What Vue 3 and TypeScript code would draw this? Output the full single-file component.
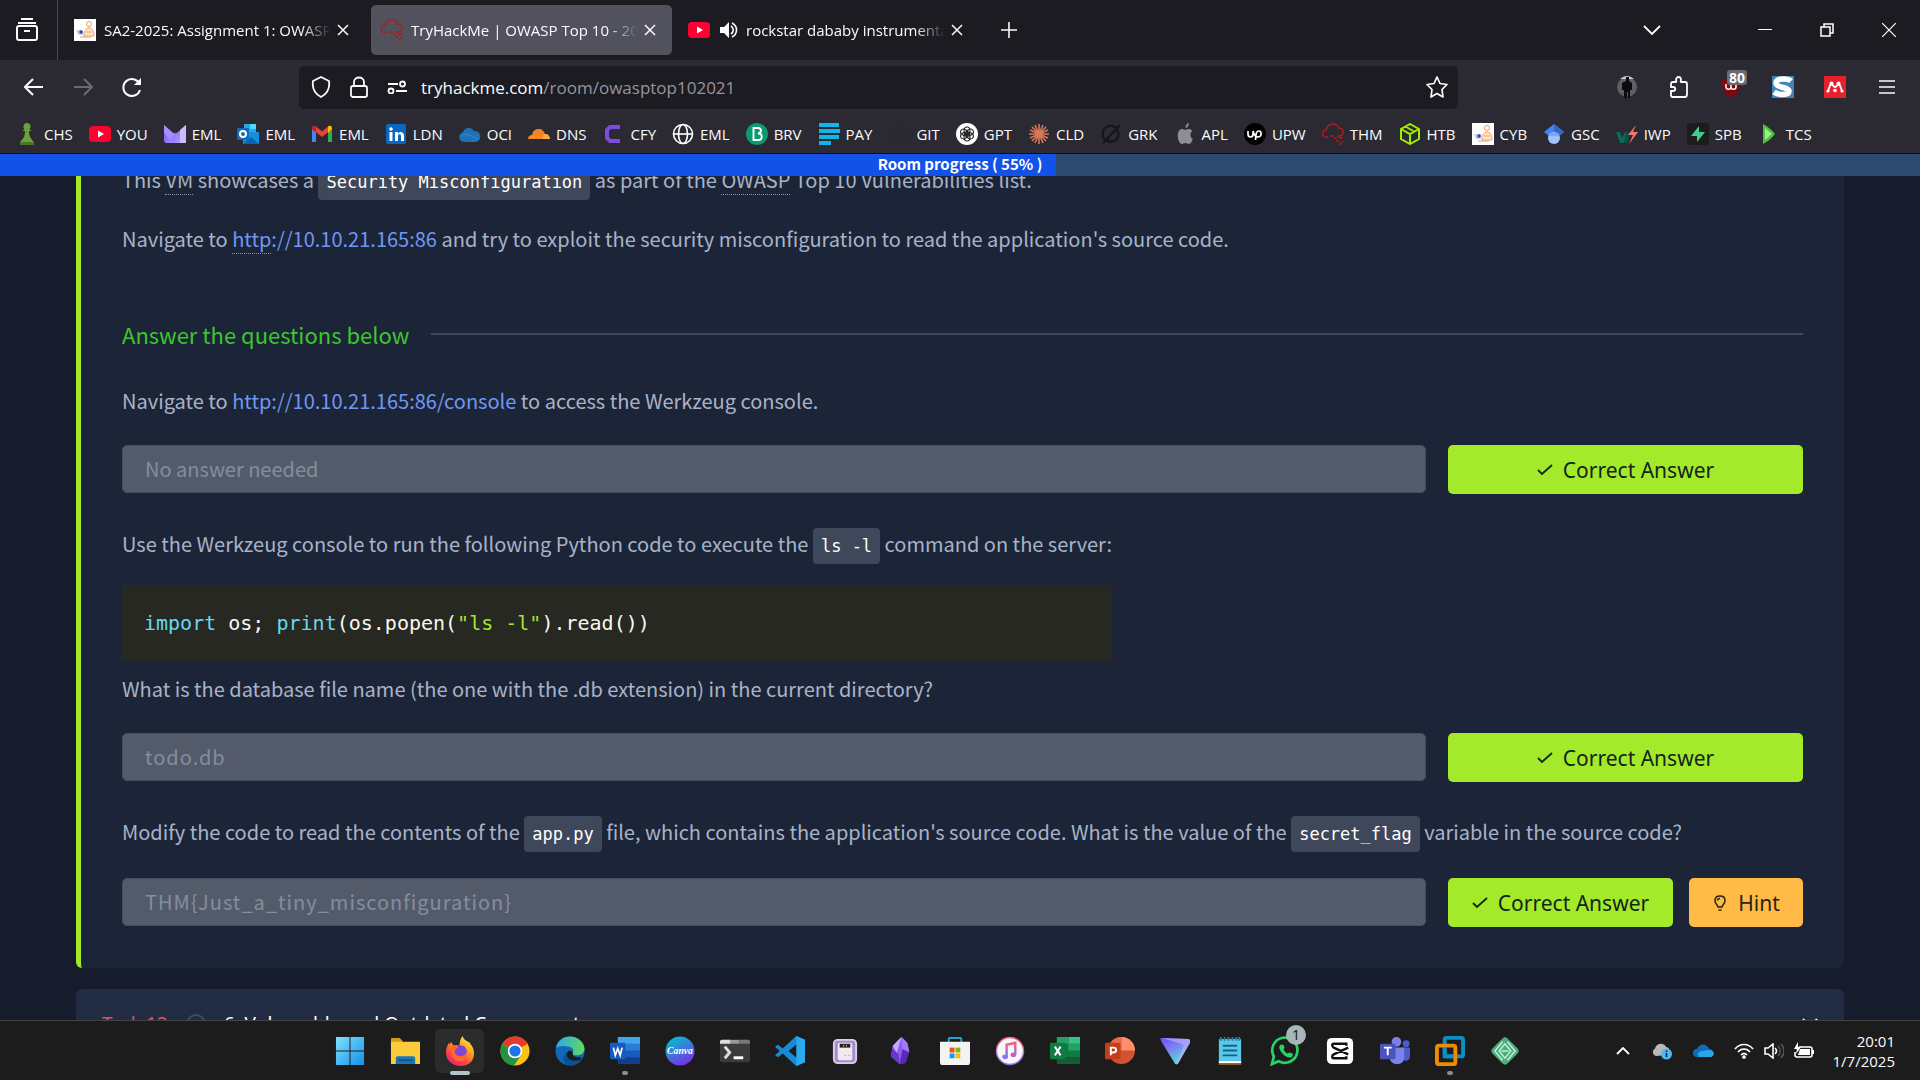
<script setup lang="ts">
import { ref } from 'vue'

interface Bookmark { label: string; icon: string }
interface App { name: string; icon: string; state?: 'active' | 'open'; badge?: string }

const cyb = '<path fill="#fff" d="M0 0h22v22H0z"/><circle cx="15" cy="5" r="2.6" fill="#fff" stroke="#f0a060"/><path d="M10 17c0-5 2-8 5-8s5 3 5 8zM12 13h6" fill="#fbe6cf" stroke="#f0a060"/><path d="M2 11h7l1 5H4z" fill="#c9d4ee"/><circle cx="7" cy="13" r="1.8" fill="#2b4aa8"/><path d="M6 18h11" stroke="#e0a070"/>'
const youtube = '<rect x="0" y="3" width="22" height="16" rx="4" fill="#ff0033"/><path d="M9 7.500v7l6-3.500z" fill="#fff"/>'
const thm = '<path d="M6 14H4a3.500 3.500 0 0 1 0-7c1-4 4-6 7-6 3 0 5 2 6 4 3 0 4 2 4 4s-1 4-3 4h-3M8 13h4" fill="none" stroke="#a91d22" stroke-width="1.500"/><path d="M12 15h3m2 0h4M14 18h3m2 1h2M17 21h3" stroke="#a91d22" stroke-width="1.500"/>'

const icons: Record<string, string> = {
  cyb, youtube, thm,
  chess: '<path fill="#6aa13c" d="M11 0a3.500 3.500 0 0 1 2.500 6l2 2h-2.500c0 4 1 6 3 9l2 2v3H4v-3l2-2c2-3 3-5 3-9H6.500l2-2A3.500 3.500 0 0 1 11 0z"/><path fill="#45762a" d="M4 19h14v3H4z"/>',
  proton: '<defs><linearGradient id="pm" x2="1" y2="1"><stop stop-color="#6d4aff"/><stop offset="1" stop-color="#b9a5ff"/></linearGradient></defs><path d="M0 2l8 7c2 1.600 4 1.600 6 0l8-7v18H3a3 3 0 0 1-3-3z" fill="url(#pm)"/><path d="M0 2l11 10-5 5-6-7z" fill="#a58cff"/><path d="M16 7l6-5v18h-6z" fill="#cbbcff"/>',
  outlook: '<path d="M7 1h12v8H7z" fill="#28a8ea"/><path d="M13 1h6v5h-6z" fill="#50d9ff"/><path d="M6 9h16v12H6z" fill="#1490df"/><path d="M6 21l8-7 8 7z" fill="#0a63b8"/><rect y="5" width="12" height="12" rx="1" fill="#0f6cbd"/><circle cx="6" cy="11" r="3" fill="none" stroke="#fff" stroke-width="2"/>',
  gmail: '<path d="M1 6v13h4V9z" fill="#4285f4"/><path d="M21 6v13h-4V9z" fill="#34a853"/><path d="M1 6c0-3 2-4 4-2.500l6 5 6-5c2-1.500 4-.5 4 2.500l-10 8z" fill="#ea4335"/><path d="M17 3.500c2-1.500 4-.5 4 2.500l-4 4z" fill="#fbbc04"/><path d="M1 6c0-3 2-4 4-2.500V9.500z" fill="#c5221f"/>',
  linkedin: '<rect x="1" y="1" width="20" height="20" rx="2" fill="#0a66c2"/><circle cx="6" cy="6" r="1.800" fill="#fff"/><path d="M4.500 9h3v9h-3zM10 9h3v1.500c2-3 6-1.500 6 2.500v5h-3v-5c0-2.500-3-2.500-3 0v5h-3z" fill="#fff"/>',
  cloud: '<path d="M5 19a5 5 0 0 1-1-9.800A6 6 0 0 1 15 8a5.600 5.600 0 0 1 2 11z" fill="#1f72b8"/><path d="M3 12c5-2 9 1 17 5" stroke="#3a8ccc" fill="none"/>',
  cloudflare: '<path d="M0 16c0-3 2-4 4-4 1-5 4-6 7-6 3 0 5 2 6 5l-1 5z" fill="#f6821f"/><path d="M14 16l2-5h2c2 0 4 2 4 5z" fill="#fbad41"/><path d="M3 14h11" stroke="#f9a04f"/>',
  cfy: '<path d="M18 4H8L5 7v8l3 3h10" fill="none" stroke="#7d4be0" stroke-width="4"/>',
  globe: '<circle cx="11" cy="11" r="9.500" fill="none" stroke="#fff" stroke-width="1.600"/><ellipse cx="11" cy="11" rx="4.500" ry="9.500" fill="none" stroke="#fff" stroke-width="1.600"/><path d="M2 11h18" stroke="#fff" stroke-width="1.600"/>',
  brv: '<circle cx="11" cy="11" r="11" fill="#0b996e"/><path d="M7.500 5h4.500c4 0 4 5 0 5.500 5 0 5 6.500 0 6.500H7.500z" fill="none" stroke="#fff" stroke-width="1.900"/>',
  pay: '<path d="M1 0h20v4H1zM1 6h21v4H1zM1 12h20v4H1zM1 18h12v4H1z" fill="#11b6e8"/>',
  git: '<circle cx="11" cy="11" r="10" fill="#2a2932"/>',
  gpt: '<circle cx="11" cy="11" r="11" fill="#fff"/><g fill="none" stroke="#222" stroke-width="1.100"><ellipse cx="11" cy="8" rx="3" ry="4"/><ellipse cx="11" cy="8" rx="3" ry="4" transform="rotate(60 11 11)"/><ellipse cx="11" cy="8" rx="3" ry="4" transform="rotate(120 11 11)"/><ellipse cx="11" cy="8" rx="3" ry="4" transform="rotate(180 11 11)"/><ellipse cx="11" cy="8" rx="3" ry="4" transform="rotate(240 11 11)"/><ellipse cx="11" cy="8" rx="3" ry="4" transform="rotate(300 11 11)"/></g>',
  claude: '<path d="M11 1v20M1 11h20M4 4l14 14M18 4L4 18M7 2l8 18M15 2L7 20M2 7l18 8M20 7L2 15" stroke="#d97757" stroke-width="1.600"/>',
  grok: '<path d="M17 6a8 8 0 1 0 1 8M3 20L20 2M6 16a7 7 0 0 0 11-9" fill="none" stroke="#15141a" stroke-width="2"/>',
  apple: '<path d="M15 0c0 3-2 5-4 5 0-3 2-5 4-5zM11 7c1 0 2-1.200 4-1 2 0 3 1 4 2-3 2-3 6 .5 8-1 3-3 5-4.500 5s-2-1-4-1-2.500 1-4 1C4 21 2 16 2 12.500 2 9 4 6 7 6c2 0 3 1 4 1z" fill="#8e8e92" transform="translate(2 0) scale(.86 1)"/>',
  upwork: '<circle cx="11" cy="11" r="11" fill="#000"/><path d="M4 8v3c0 4 5 4 5 0V8c1 4 3 6 5 6 4 0 4-6 1-6-3 0-3 3-3.500 9" fill="none" stroke="#fff" stroke-width="1.700"/>',
  htb: '<path d="M11 1l9 5v10l-9 5-9-5V6zM2 6l9 5 9-5M11 11v10M6.500 3.500L15 8.500" fill="none" stroke="#9fef00" stroke-width="2"/>',
  scholar: '<path d="M11 1l10 8-10 8L1 9z" fill="#4285f4"/><path d="M11 1l10 8-4 3-6-4z" fill="#356ac3"/><circle cx="11" cy="15" r="6" fill="#a0c3ff"/><path d="M5.600 13a6 6 0 0 1 10.800 0" fill="#76a7fa"/>',
  iwp: '<path d="M0 9h4l2 6 3-6h3l-4 11H4z" fill="#0c6b58"/><path d="M10 9h4l-2 11H8z" fill="#0a4f45"/><path d="M20 2l-8 10h5l-4 9 9-12h-5z" fill="#f3776b"/>',
  supabase: '<rect width="22" height="22" rx="3" fill="#1c1c1c"/><path d="M12 3v6h6l-8 10v-6H4z" fill="#3ecf8e"/>',
  tcs: '<path d="M5 1c4 2 8 5 12 10-4 5-8 8-12 10z" fill="#4cc238"/><path d="M7 5l7 6-7 6z" fill="#a5ea8c"/>',
}

const bookmarks: Bookmark[] = [
  { label: 'CHS', icon: 'chess' }, { label: 'YOU', icon: 'youtube' }, { label: 'EML', icon: 'proton' },
  { label: 'EML', icon: 'outlook' }, { label: 'EML', icon: 'gmail' }, { label: 'LDN', icon: 'linkedin' },
  { label: 'OCI', icon: 'cloud' }, { label: 'DNS', icon: 'cloudflare' }, { label: 'CFY', icon: 'cfy' },
  { label: 'EML', icon: 'globe' }, { label: 'BRV', icon: 'brv' }, { label: 'PAY', icon: 'pay' },
  { label: 'GIT', icon: 'git' }, { label: 'GPT', icon: 'gpt' }, { label: 'CLD', icon: 'claude' },
  { label: 'GRK', icon: 'grok' }, { label: 'APL', icon: 'apple' }, { label: 'UPW', icon: 'upwork' },
  { label: 'THM', icon: 'thm' }, { label: 'HTB', icon: 'htb' }, { label: 'CYB', icon: 'cyb' },
  { label: 'GSC', icon: 'scholar' }, { label: 'IWP', icon: 'iwp' }, { label: 'SPB', icon: 'supabase' },
  { label: 'TCS', icon: 'tcs' },
]

const apps: App[] = [
  { name: 'Start', icon: '<defs><linearGradient id="wn" x2="1" y2="1"><stop stop-color="#7fe3ff"/><stop offset="1" stop-color="#1590e8"/></linearGradient></defs><path fill="url(#wn)" d="M1 1h14v14H1zM16 1h14v14H16zM1 16h14v14H1zM16 16h14v14H16z"/>' },
  { name: 'File Explorer', icon: '<path d="M1 4c0-1 0-2 1-2h8l3 3v6H1z" fill="#d99a10"/><path d="M1 6h30v21c0 2 0 2-1 2H2c-1 0-1 0-1-2z" fill="#fccb3a"/><path d="M6 23c0-1 1-2 2-2h16c1 0 2 1 2 2v6H6z" fill="#1a76b8"/><path d="M9 25h14" stroke="#0c5590" stroke-width="2"/>' },
  { name: 'Firefox', state: 'active', icon: '<defs><linearGradient id="ff" x1=".8" x2=".2" y2="1"><stop stop-color="#fff04a"/><stop offset=".4" stop-color="#ff9a1e"/><stop offset=".75" stop-color="#ff3b4a"/><stop offset="1" stop-color="#e0218a"/></linearGradient></defs><path d="M18 0c2 5 5 5 7 7 0-1 1 0 1 1 3 3 4 7 4 10 0 8-6 13-14 13S1 25 1 17c0-4 2-8 3-10l1 2 1-3 3 4c3-1 5 0 6 0 0-4 1-7 3-10z" fill="url(#ff)"/><circle cx="16" cy="16" r="6.500" fill="#8144d8"/><path d="M6 11c3-2 6-1 8 1-2 1-4 2-4 4 0 3 3 5 6 5s5-2 6-4c1 5-2 9-7 9-7 0-10-8-9-15z" fill="#ff6a2c"/>' },
  { name: 'Chrome', icon: '<circle cx="15.500" cy="15.500" r="15" fill="#fbc116"/><path d="M15.500 15.500L2.500 8a15 15 0 0 1 26 0z" fill="#e33b2e"/><path d="M15.500 15.500L2.500 8a15 15 0 0 0 12 22.500l7.500-11z" fill="#229342"/><circle cx="15.500" cy="15.500" r="7.500" fill="#fff"/><circle cx="15.500" cy="15.500" r="5.800" fill="#1a73e8"/>' },
  { name: 'Edge', icon: '<defs><linearGradient id="e1" x2="1"><stop stop-color="#2aa8e8"/><stop offset="1" stop-color="#5fdc5f"/></linearGradient></defs><circle cx="15.500" cy="15.500" r="15" fill="#1267b8"/><path d="M1 13C2 5 8 .5 15.500.5S30 6 30.500 13c0 5-4 7-8 7-3 0-5-1-4-3 1-1 1-5-4-6C9 10 3 10 1 13z" fill="url(#e1)"/><path d="M12 17c-1 7 5 11 15 8-3 4-7 5.500-11 5.500C9 30 6 22 12 17z" fill="#0b4f96"/><path d="M12 18c2-4 4-4 6.500-1-1 3 1 5 7 5 3 0 2 2 0 3-9 2-14-2-13.500-7z" fill="#1c1c1c"/>' },
  { name: 'Word', state: 'open', icon: '<path d="M8 1h23v8H8z" fill="#41a5ee"/><path d="M8 8h23v8H8z" fill="#2b7cd3"/><path d="M8 15h23v8H8z" fill="#185abd"/><path d="M8 22h23v7H8z" fill="#103f91"/><rect y="7" width="16" height="17" rx="1" fill="#185abd"/><path d="M3.500 12l2 8 2.500-7 2.500 7 2-8" fill="none" stroke="#fff" stroke-width="1.800"/>' },
  { name: 'Canva', icon: '<defs><linearGradient id="cv" x1=".2" x2=".7" y2="1"><stop stop-color="#00c4cc"/><stop offset="1" stop-color="#7d2ae8"/></linearGradient></defs><circle cx="15.500" cy="15.500" r="15" fill="url(#cv)"/><text x="15.500" y="19" font-size="10" font-style="italic" font-weight="700" font-family="Liberation Serif, serif" text-anchor="middle" fill="#fff">Canva</text>' },
  { name: 'Terminal', icon: '<rect x="0" y="4" width="31" height="23" rx="2" fill="#3b3b3b"/><path d="M0 8V6c0-1 1-2 2-2h9v4z" fill="#ddd"/><path d="M11 4h9v4h-9z" fill="#999"/><path d="M20 4h9c1 0 2 1 2 2v2H20z" fill="#777"/><path d="M5 11l5 6-5 6" fill="none" stroke="#ddd" stroke-width="3"/><path d="M14 22.500h10" stroke="#fff" stroke-width="3"/>' },
  { name: 'Visual Studio Code', icon: '<path d="M22 0l9 4v23l-9 4L8 18l-5 4-3-2 5-4.500L0 11l3-2 5 4zM23 8l-9 7.500 9 7.500z" fill="#1a8ad4" fill-rule="evenodd"/><path d="M22 0l9 4v23l-9 4z" fill="#2aa9f0"/>' },
  { name: 'Device', icon: '<rect x="4" y="4" width="23" height="24" rx="4" fill="#a78bd0" stroke="#d8d0e4" stroke-width="2"/><rect x="8" y="7" width="15" height="18" rx="2" fill="#eee9f2"/><path d="M10 8h11v4H10z" fill="#222"/><path d="M14 9v2m3-2v2" stroke="#e0b020"/><path d="M15 20h2m2 0h2" stroke="#aaa"/>' },
  { name: 'Obsidian', icon: '<path d="M17 1l6 6 2 9-4 12-6 1-9-8 2-11z" fill="#8b5cf6"/><path d="M17 1l-9 9 4 8z" fill="#c4a8fb"/><path d="M17 1l6 6 2 9-7-3z" fill="#a27bf5"/><path d="M8 13l6 6 1 10-9-8z" fill="#6a35cf"/><path d="M18 14l7 3-4 11-6 1z" fill="#5b28b8"/>' },
  { name: 'Microsoft Store', icon: '<path d="M9 7V3c0-1 0-1 1-1h11c1 0 1 0 1 1v4" fill="none" stroke="#28a0d8" stroke-width="2"/><path d="M0 6h31v21c0 2-1 3-3 3H3c-2 0-3-1-3-3z" fill="#f3f3f3"/><path d="M10 12h5v5h-5z" fill="#f25022"/><path d="M16 12h5v5h-5z" fill="#7fba00"/><path d="M10 18h5v5h-5z" fill="#00a4ef"/><path d="M16 18h5v5h-5z" fill="#ffb900"/>' },
  { name: 'iTunes', icon: '<defs><linearGradient id="it" x2="0" y2="1"><stop stop-color="#fb5c74"/><stop offset="1" stop-color="#7f7bf5"/></linearGradient></defs><circle cx="15.500" cy="15.500" r="14" fill="#f8f8fb" stroke="url(#it)" stroke-width="1.500"/><path d="M12 21V9l9-2v12" fill="none" stroke="url(#it)" stroke-width="2.500"/><ellipse cx="10.500" cy="21.500" rx="3" ry="2.500" fill="#7f7bf5"/><ellipse cx="19" cy="19.500" rx="3" ry="2.500" fill="#c45ccf"/>' },
  { name: 'Excel', icon: '<path d="M7 1h12v8H7z" fill="#21a366"/><path d="M19 1h12v8H19z" fill="#33c481"/><path d="M7 8h24v14H7z" fill="#107c41"/><path d="M19 8h12v7H19z" fill="#21a366"/><path d="M7 22h24v7H7z" fill="#185c37"/><rect y="7" width="16" height="17" rx="1" fill="#107c41"/><path d="M5 11l6 9M11 11l-6 9" stroke="#fff" stroke-width="2"/>' },
  { name: 'PowerPoint', icon: '<circle cx="17" cy="15" r="14" fill="#d35230"/><path d="M17 1a14 14 0 0 1 14 14H17z" fill="#ff8f6b"/><path d="M17 1a14 14 0 0 0-14 14h14z" fill="#ed6c47"/><rect y="7" width="16" height="17" rx="1" fill="#c43e1c"/><path d="M6 20v-8h2.500c4 0 4 5 0 5H6" fill="none" stroke="#fff" stroke-width="2"/>' },
  { name: 'Proton VPN', icon: '<defs><linearGradient id="pv" x2=".6" y2="1"><stop stop-color="#6d4aff"/><stop offset=".5" stop-color="#7b8af0"/><stop offset="1" stop-color="#3ef0c0"/></linearGradient></defs><path d="M2 2l27 1c2 0 3 2 2 4L19 28c-1 2-3 2-4 0L1 5C0 3 0 2 2 2z" fill="url(#pv)"/><path d="M2 2l27 1c2 0 3 2 2 4L19 28c-1 1-2 1-3 0l8-16c1-2 0-4-2-4z" fill="#bfa8ff" opacity=".7"/>' },
  { name: 'Notepad', icon: '<rect x="4" y="3" width="23" height="27" rx="1" fill="#5cc8e8"/><path d="M4 27h23v3H4z" fill="#8a5424"/><path d="M4 26h23v2H4z" fill="#fff"/><path d="M8 10h15M8 15h15M8 20h15" stroke="#14628c" stroke-width="2"/><path d="M6 1v4m4-4v4m4-4v4m4-4v4m4-4v4m3-4v4" stroke="#1780b0" stroke-width="2"/>' },
  { name: 'WhatsApp', badge: '1', icon: '<path d="M2 29l2-8a13 13 0 1 1 5 5z" fill="#1c1c1c" stroke="#25d366" stroke-width="2.800"/><path d="M11 9c-2 1-2 4 1 8s7 6 10 5c2-1 2-4 1-4l-3-1-2 1c-2-1-3-2-4-4l1-2-1-3z" fill="#25d366"/>' },
  { name: 'CapCut', icon: '<rect x="2" y="2" width="27" height="27" rx="5" fill="#fff"/><path d="M22 10V8H9c-2 0-2 3 0 4l15 7M22 21v2H9c-2 0-2-3 0-4l15-7" fill="none" stroke="#111" stroke-width="2.500"/>' },
  { name: 'Teams', icon: '<circle cx="17" cy="6" r="5" fill="#7b83eb"/><circle cx="27" cy="8" r="3.500" fill="#5059c9"/><path d="M22 12h9v9c0 6-8 6-9 1z" fill="#5059c9"/><path d="M10 12h15v10c0 10-15 9-15 0z" fill="#7b83eb"/><rect y="8" width="16" height="16" rx="1" fill="#4b53bc"/><path d="M4 12h8M8 12v8" stroke="#fff" stroke-width="2"/>' },
  { name: 'VMware', state: 'open', icon: '<rect x="10" y="2" width="19" height="19" rx="2" fill="none" stroke="#0b8fc7" stroke-width="4"/><rect x="2" y="10" width="19" height="19" rx="2" fill="none" stroke="#f08a00" stroke-width="4"/><path d="M10 12v9h9" fill="none" stroke="#0b8fc7" stroke-width="4"/>' },
  { name: 'Vault', icon: '<rect x="4.500" y="4.500" width="22" height="22" rx="4" fill="#4cae7f" transform="rotate(45 15.500 15.500)"/><path d="M13 6l-8 9.500 8 9.500M18 6l8 9.500-8 9.500M15.500 8l-6 7.500 6 7.500 6-7.500zM12 15.500h7" fill="none" stroke="#c8efd9" stroke-width="1.400"/>' },
]

const answers = ref(['', 'todo.db', 'THM{Just_a_tiny_misconfiguration}'])
</script>

<template>
  <div class="screen">
    <header class="browser">
      <div class="tabs">
        <button class="view" aria-label="Recent browsing">
          <svg width="24" height="24" viewBox="0 0 24 24" fill="none" stroke="#fbfbfe" stroke-width="2"><rect x="2" y="8" width="20" height="14" rx="2" /><path d="M3 5h18M6 1h12M9 13h6" /></svg>
        </button>
        <div class="tab">
          <svg class="fav" viewBox="0 0 22 22" v-html="icons.cyb" />
          <span class="tab-title">SA2-2025: Assignment 1: OWASP</span>
          <button class="close" aria-label="Close tab"><svg width="12" height="12" viewBox="0 0 12 12"><path d="M1 1l10 10M11 1L1 11" stroke="#fbfbfe" stroke-width="1.500" /></svg></button>
        </div>
        <div class="tab on">
          <svg class="fav" viewBox="0 0 22 22" v-html="icons.thm" />
          <span class="tab-title">TryHackMe | OWASP Top 10 - 202</span>
          <button class="close" aria-label="Close tab"><svg width="12" height="12" viewBox="0 0 12 12"><path d="M1 1l10 10M11 1L1 11" stroke="#fbfbfe" stroke-width="1.500" /></svg></button>
        </div>
        <div class="tab">
          <svg class="fav" viewBox="0 0 22 22" v-html="icons.youtube" />
          <svg class="sound" width="18" height="18" viewBox="0 0 18 18"><path d="M0 6h4l5-5v16l-5-5H0z" fill="#fbfbfe" /><path d="M11 5c3 2 3 6 0 8M12 2c6 3 6 11 0 14" fill="none" stroke="#fbfbfe" stroke-width="1.600" /></svg>
          <span class="tab-title">rockstar dababy instrumenta</span>
          <button class="close" aria-label="Close tab"><svg width="12" height="12" viewBox="0 0 12 12"><path d="M1 1l10 10M11 1L1 11" stroke="#fbfbfe" stroke-width="1.500" /></svg></button>
        </div>
        <button class="plus" aria-label="New tab"><svg width="18" height="18" viewBox="0 0 18 18"><path d="M9 1v16M1 9h16" stroke="#fbfbfe" stroke-width="1.600" /></svg></button>
        <div class="window">
          <button class="list" aria-label="List all tabs"><svg width="18" height="12" viewBox="0 0 18 12"><path d="M1 2l8 8 8-8" fill="none" stroke="#fbfbfe" stroke-width="1.800" /></svg></button>
          <button aria-label="Minimize"><svg width="14" height="14" viewBox="0 0 14 14"><path d="M0 6.500h14" stroke="#fff" /></svg></button>
          <button aria-label="Restore"><svg width="14" height="14" viewBox="0 0 14 14" fill="none" stroke="#fff" stroke-width="1.500"><path d="M1 4h9v9H1zM4 4V1h9v9h-3" /></svg></button>
          <button aria-label="Close"><svg width="14" height="14" viewBox="0 0 14 14"><path d="M0 0l14 14M14 0L0 14" stroke="#fff" stroke-width="1.200" /></svg></button>
        </div>
      </div>

      <div class="nav">
        <button aria-label="Back"><svg width="20" height="20" viewBox="0 0 20 20" fill="none" stroke="#fbfbfe" stroke-width="2"><path d="M19 10H2M9 2l-8 8 8 8" /></svg></button>
        <button aria-label="Forward" disabled><svg width="20" height="20" viewBox="0 0 20 20" fill="none" stroke="#6b6a73" stroke-width="2"><path d="M1 10h17M11 2l8 8-8 8" /></svg></button>
        <button aria-label="Reload"><svg width="20" height="20" viewBox="0 0 20 20" fill="none" stroke="#fbfbfe" stroke-width="2"><path d="M18 8a8.500 8.500 0 1 0 0 5" /><path d="M19 1v7h-7z" fill="#fbfbfe" stroke="none" /></svg></button>
        <div class="address">
          <svg width="20" height="22" viewBox="0 0 20 22" fill="none" stroke="#fbfbfe" stroke-width="1.800"><path d="M10 1l8 4c1 7-2 13-8 16C4 18 1 12 2 5z" /></svg>
          <svg width="18" height="22" viewBox="0 0 18 22" fill="none" stroke="#fbfbfe" stroke-width="1.800"><rect x="1" y="10" width="16" height="11" rx="2" /><path d="M4 10V6c0-6 10-6 10 0v4" /></svg>
          <svg width="20" height="14" viewBox="0 0 20 14" fill="none" stroke="#fbfbfe" stroke-width="1.800"><path d="M1 4h10M9 11h11" /><circle cx="15.500" cy="4" r="2.500" /><circle cx="4" cy="11" r="2.500" /></svg>
          <div class="url">tryhackme.com<span>/room/owasptop102021</span></div>
          <svg width="22" height="22" viewBox="0 0 22 22" fill="none" stroke="#fbfbfe" stroke-width="1.700" stroke-linejoin="round"><path d="M11 1l3 6.500 7 1-5 5 1 7.500-6-3.500L5 21l1-7.500-5-5 7-1z" /></svg>
        </div>
        <div class="extensions">
          <button aria-label="Profile"><svg width="22" height="22" viewBox="0 0 22 22"><circle cx="11" cy="11" r="10" fill="#5e5e64" /><path d="M4 3c5-4 9-4 14 0z" fill="#ccc" /><path d="M10 5V1h3v4l3 2v7h-2v8h-2v-6h-1v6H8v-8H6V7z" fill="#0b0b0d" /></svg></button>
          <button aria-label="Extensions"><svg width="20" height="22" viewBox="0 0 20 22" fill="none" stroke="#fbfbfe" stroke-width="1.800"><path d="M2 8c0-2 1-2 2-2h3c1 0 0-1 0-2 0-4 5-4 5 0 0 1-1 2 0 2h4c2 0 2 1 2 2v10c0 2-1 3-2 3H4c-2 0-2-1-2-3v-3h2c3 0 3-4 0-4H2z" /></svg></button>
          <button class="ublock" aria-label="uBlock Origin"><svg width="20" height="22" viewBox="0 0 20 22"><path d="M10 1l9 3c0 9-1 13-9 18C2 17 1 13 1 4z" fill="#800610" /><path d="M5 8v3c0 3 5 3 5 0 0 3 5 3 5 0V8M10 8v4" fill="none" stroke="#fff" stroke-width="1.500" /></svg><b>80</b></button>
          <button aria-label="Scribd"><svg width="22" height="22" viewBox="0 0 22 22"><path d="M0 0h22v22H0z" fill="#4085b8" /><path d="M19 5C16 2 4 2 4 7c0 5 13 4 13 8 0 5-11 4-15 1" fill="none" stroke="#fff" stroke-width="5.500" /></svg></button>
          <button aria-label="Mendeley"><svg width="22" height="22" viewBox="0 0 22 22"><path d="M0 0h22v22H0z" fill="#e8202e" /><path d="M4 15c1-1 1-5 3-7 2 0 2 3 4 3s2-3 4-3c2 2 2 6 3 7" fill="none" stroke="#fff" stroke-width="1.800" /><circle cx="7.500" cy="7.500" r="2" fill="#fff" /><circle cx="14.500" cy="7.500" r="2" fill="#fff" /><circle cx="11" cy="14.500" r="1.800" fill="#fff" /><circle cx="4" cy="15" r="1.600" fill="#fff" /><circle cx="18" cy="15" r="1.600" fill="#fff" /></svg></button>
          <button aria-label="Menu"><svg width="16" height="14" viewBox="0 0 16 14"><path d="M0 1h16M0 7h16M0 13h16" stroke="#fbfbfe" stroke-width="1.600" /></svg></button>
        </div>
      </div>

      <nav class="bookmarks" aria-label="Bookmarks">
        <a v-for="(b, i) in bookmarks" :key="i" href="#"><svg class="fav" viewBox="0 0 22 22" v-html="icons[b.icon]" />{{ b.label }}</a>
      </nav>
    </header>

    <main class="page">
      <div class="progress"><div class="fill" :style="{ width: '55%' }"></div><b>Room progress ( 55% )</b></div>

      <article class="task">
        <p>This <abbr>VM</abbr> showcases a <code>Security Misconfiguration</code> as part of the <abbr>OWASP</abbr> Top 10 Vulnerabilities list.</p>
        <p>Navigate to <a href="#"><abbr>http</abbr>://10.10.21.165:86</a> and try to exploit the security misconfiguration to read the application's source code.</p>
        <h2>Answer the questions below</h2>

        <label class="question" for="answer-1">Navigate to <a href="#">http://10.10.21.165:86/console</a> to access the Werkzeug console.</label>
        <div class="row">
          <input id="answer-1" v-model="answers[0]" type="text" placeholder="No answer needed" disabled>
          <div class="actions"><button class="correct"><svg class="glyph" viewBox="0 0 16 16"><path d="M1 8l4 4L15 3" fill="none" stroke="#13251b" stroke-width="1.800" /></svg>Correct Answer</button></div>
        </div>

        <div class="snippet">
          <p>Use the Werkzeug console to run the following Python code to execute the <code>ls -l</code> command on the server:</p>
          <pre><i>import</i> os; <i>print</i>(os.popen(<em>"ls -l"</em>).read())</pre>
        </div>
        <label class="question" for="answer-2">What is the database file name (the one with the .db extension) in the current directory?</label>
        <div class="row">
          <input id="answer-2" v-model="answers[1]" type="text" class="filled" disabled>
          <div class="actions"><button class="correct"><svg class="glyph" viewBox="0 0 16 16"><path d="M1 8l4 4L15 3" fill="none" stroke="#13251b" stroke-width="1.800" /></svg>Correct Answer</button></div>
        </div>

        <label class="question" for="answer-3">Modify the code to read the contents of the <code>app.py</code> file, which contains the application's source code. What is the value of the <code>secret_flag</code> variable in the source code?</label>
        <div class="row">
          <input id="answer-3" v-model="answers[2]" type="text" class="filled" disabled>
          <div class="actions">
            <button class="correct"><svg class="glyph" viewBox="0 0 16 16"><path d="M1 8l4 4L15 3" fill="none" stroke="#13251b" stroke-width="1.800" /></svg>Correct Answer</button>
            <button class="hint"><svg class="glyph" viewBox="0 0 16 16"><path d="M6 12c0-2-3-3-3-6.500C3 2.500 5 1 8 1s5 1.500 5 4.500C13 9 10 10 10 12zM6.500 15h3M5.500 5.500C5.500 4 6.500 3.500 8 3.500" fill="none" stroke="#2b2413" stroke-width="1.500" /></svg>Hint</button>
          </div>
        </div>
      </article>

      <section class="next">
        <span class="num">Task 12</span>
        <svg width="20" height="20" viewBox="0 0 20 20"><circle cx="10" cy="10" r="9" fill="none" stroke="#3f4a61" stroke-width="2" /></svg>
        <span class="name">6. Vulnerable and Outdated Components</span>
        <svg width="16" height="12" viewBox="0 0 16 12"><path d="M1 1l7 8 7-8" fill="none" stroke="#e6eaf2" stroke-width="2" /></svg>
      </section>
    </main>

    <footer class="taskbar">
      <div class="apps">
        <button v-for="a in apps" :key="a.name" :class="a.state" :aria-label="a.name">
          <svg width="30" height="30" viewBox="0 0 31 31" v-html="a.icon" />
          <span v-if="a.badge" class="badge">{{ a.badge }}</span>
        </button>
      </div>
      <div class="tray">
        <svg width="14" height="8" viewBox="0 0 14 8"><path d="M1 7l6-6 6 6" fill="none" stroke="#fff" stroke-width="1.800" /></svg>
        <svg class="sync" width="21" height="18" viewBox="0 0 21 18"><path d="M4 14a4 4 0 0 1-1-7.500C4 1 12 0 14 5c4 0 5 6 1 8z" fill="#b8b8b8" /><circle cx="14.500" cy="12" r="5.500" fill="#4db8f5" /><path d="M14.500 11v4M14.500 8.500v1.500" stroke="#0a2a44" stroke-width="1.600" /></svg>
        <svg class="drive" width="21" height="14" viewBox="0 0 21 14"><path d="M4 13a4 4 0 0 1 0-8c2-6 10-6 12 0 6 0 6 8 1 8z" fill="#0f6cbd" /><path d="M6 13c-3-3 0-6 4-6l6-1c6 0 6 7 1 7z" fill="#28a8ea" /></svg>
        <svg width="20" height="16" viewBox="0 0 20 16" fill="none" stroke="#fff" stroke-width="1.700"><path d="M1 6c5-6 13-6 18 0M4 9c3-4 9-4 12 0M7 12c2-2 4-2 6 0" /><circle cx="10" cy="14" r="1" fill="#fff" /></svg>
        <svg width="20" height="16" viewBox="0 0 20 16" fill="none" stroke="#fff" stroke-width="1.600"><path d="M1 5h3l5-4v14l-5-4H1zM11 5c2 2 2 4 0 6" /><path d="M14 3c3 3 3 7 0 10M17 1c4 4 4 10 0 14" stroke="#555" /></svg>
        <svg width="20" height="18" viewBox="0 0 20 18"><path d="M5 5h11c1 0 2 1 2 2v6c0 1-1 2-2 2H3c-1 0-2-1-2-2v-3" fill="none" stroke="#fff" stroke-width="1.600" /><path d="M6 7h10v6H4z" fill="#fff" /><path d="M19 8v4" stroke="#fff" stroke-width="2" /><path d="M4 0L0 7h3l-1 5 5-7H4z" fill="#fff" /></svg>
        <time>20:01<br>1/7/2025</time>
      </div>
    </footer>
  </div>
</template>

<style>
body { background: #161c2b; }
</style>

<style scoped>
.screen { display: flex; flex-direction: column; height: 100vh; overflow: hidden; font-family: "Open Sans", "Noto Sans", sans-serif; color: #fbfbfe; }
.screen * { box-sizing: border-box; }
button { border: 0; padding: 0; background: none; color: inherit; font: inherit; display: flex; align-items: center; justify-content: center; }
svg { display: block; flex: none; }
a { text-decoration: none; }

.browser { flex: none; background: #2b2a33; border-bottom: 1px solid #0e0e12; }
.tabs { display: flex; align-items: center; height: 60px; background: #1c1b22; }
.view { width: 58px; height: 60px; padding-right: 4px; border-right: 1px solid #4a4953; }
.tab { display: flex; align-items: center; width: 301px; height: 50px; margin-left: 6px; padding: 0 10px; border-radius: 5px; font-size: 15px; }
.tab.on { background: #52525e; }
.fav { width: 22px; height: 22px; }
.sound { margin-left: 10px; }
.tab-title { flex: 1; min-width: 0; margin-left: 8px; overflow: hidden; white-space: nowrap; mask-image: linear-gradient(to left, transparent, #000 30px); }
.close { width: 24px; height: 24px; }
.plus { width: 40px; height: 40px; margin-left: 10px; }
.window { display: flex; margin-left: auto; }
.window button { width: 62px; height: 60px; }
.window .list { margin-right: 51px; }

.nav { display: flex; align-items: center; height: 54px; padding: 0 7px 0 9px; }
.nav > button { width: 49px; height: 40px; }
.address { display: flex; align-items: center; flex: 1; gap: 19px; height: 43px; margin-left: 143px; padding: 0 10px 0 12px; border-radius: 5px; background: #1c1b22; }
.url { flex: 1; margin-left: -5px; font-size: 17px; }
.url span { color: #96959d; }
.extensions { display: flex; margin-left: 143px; }
.extensions button { width: 52px; height: 40px; position: relative; }
.ublock b { position: absolute; left: 22px; top: 3px; padding: 0 2px; border-radius: 3px; background: #6a6a6e; font: 700 14px/15px "Open Sans", sans-serif; }

.bookmarks { display: flex; height: 39px; align-items: center; padding-left: 16px; gap: 16px; }
.bookmarks a { display: flex; align-items: center; gap: 6px; color: #fbfbfe; font-size: 15px; }

.page { flex: 1; min-height: 0; overflow: hidden; background: #161c2b; font-family: "Noto Sans CJK SC", "Noto Sans", sans-serif; }
.progress { position: relative; z-index: 1; height: 22px; background: #2c4a70; }
.fill { height: 22px; background: #1352e8; }
.progress b { position: absolute; inset: 0; text-align: center; font-size: 15px; line-height: 20px; color: #fff; }

.task { margin: -14px 76px 0; padding: 0 41px 41px; border-left: 5px solid #a3ea2a; border-radius: 0 0 6px 6px; background: #1c2538; color: #a9b3c8; font-size: 20px; line-height: 35px; }
.task p { margin: 0 0 22px; }
.task a { color: #6f97f5; }
abbr { border-bottom: 1px dotted #8d97ab; }
code { padding: 8px; border-radius: 4px; background: #3f475a; color: #fff; font: 17px/34px "DejaVu Sans Mono", monospace; }
h2 { display: flex; align-items: center; gap: 22px; margin: 58px 0 29px; font-size: 22px; line-height: 40px; font-weight: 400; color: #3fc52f; }
h2::after { content: ""; flex: 1; height: 2px; background: #3f475a; }
.question { display: block; }
.row { display: flex; gap: 22px; margin: 27px 0 32px; }
.row:last-child { margin-bottom: 0; }
input { flex: 1; min-width: 0; height: 48px; padding: 0 22px 1px; border: 1px solid #454e61; border-radius: 5px; background: #535b6b; color: #838d9f; font: 20px "Noto Sans CJK SC", "Noto Sans", sans-serif; }
input::placeholder { color: #838d9f; opacity: 1; }
.filled { letter-spacing: 1px; }
.actions { display: flex; gap: 16px; width: 355px; height: 49px; }
.actions button { gap: 10px; border-radius: 5px; font: 21px "Noto Sans", sans-serif; }
.glyph { width: 16px; height: 16px; }
.correct { flex: 1; background: #a3ea2a; color: #13251b; }
.actions .hint { width: 114px; background: #ffbb45; color: #2b2413; }
.snippet { width: fit-content; }
pre { height: 76px; margin: 0 0 10px; padding: 0 22px; background: #272822; color: #f8f8f2; font: 20px/76px "DejaVu Sans Mono", monospace; }
pre i { font-style: normal; color: #66d9ef; }
pre em { font-style: normal; color: #a6e22e; }

.next { display: flex; align-items: center; height: 70px; margin: 21px 76px 0; padding: 0 26px; border-radius: 6px; background: #212c42; font: 19px "Noto Sans", sans-serif; }
.num { color: #e0506a; margin-right: 18px; }
.name { flex: 1; margin-left: 18px; color: #fff; }

.taskbar { display: flex; justify-content: space-between; align-items: center; flex: none; height: 60px; padding: 0 25px 0 322px; background: #1c1c1c; border-top: 1px solid #414141; }
.apps { display: flex; }
.apps button { position: relative; width: 55px; height: 50px; border: 3px solid transparent; background-clip: padding-box; border-radius: 8px; }
.apps .active { background-color: #2b2b2b; }
.apps .active::after, .apps .open::after { content: ""; position: absolute; bottom: -2px; width: 6px; height: 4px; border-radius: 2px; background: #8d8d8d; }
.apps .active::after { width: 20px; background: #b0c4c8; }
.badge { position: absolute; left: 26px; top: -4px; width: 20px; height: 20px; border-radius: 10px; background: #a8b6b8; color: #111; font-size: 14px; line-height: 20px; }
.tray { display: flex; align-items: center; gap: 10px; }
.sync { margin-left: 12px; }
.drive { margin: 0 10px; }
time { margin-left: 9px; text-align: right; font-size: 15px; line-height: 20px; }
</style>
